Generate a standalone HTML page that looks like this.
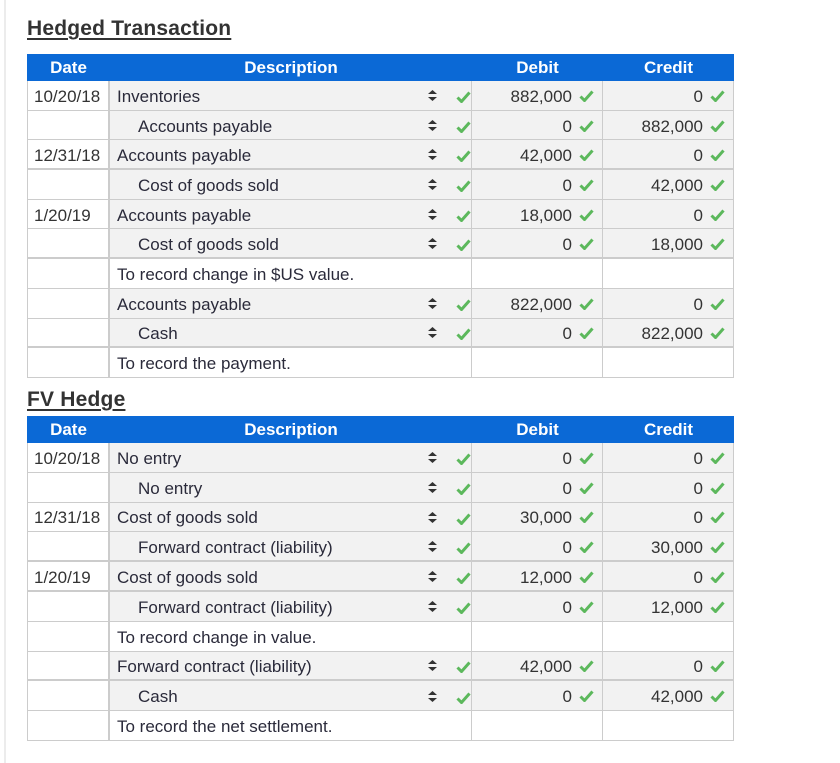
<!DOCTYPE html>
<html><head><meta charset="utf-8">
<style>
*{box-sizing:border-box;margin:0;padding:0}
body{width:840px;height:763px;background:#fff;font-family:"Liberation Sans",sans-serif;color:#333;position:relative;overflow:hidden}
.lb{position:absolute;left:4px;top:0;width:2px;height:763px;background:#ececec}
h2{position:absolute;left:27px;font-size:21px;font-weight:bold;color:#333;text-decoration:underline;text-underline-offset:3px;letter-spacing:0.2px}
.tbl{position:absolute;left:27px;width:707px}
.hd{height:27px;background:#0b69d6;color:#fff;font-weight:bold;font-size:17px;display:flex;align-items:center;padding-top:1px}
.hd div{text-align:center}
.r{display:flex;border-bottom:1px solid #ccc;font-size:17px}
.r.t{border-bottom:2px solid #ccc}
.c{display:flex;align-items:center;height:100%;padding-top:3px}
.d{width:83px;border-right:2px solid #ccc;border-left:1px solid #ccc;padding-left:6px;background:#fff}
.s{width:362px;background:#f2f2f2;border-right:1px solid #ccc;padding-left:7px;position:relative;color:#2a2a3a}
.s.i{padding-left:28px}
.n{width:131px;background:#f2f2f2;border-right:1px solid #ccc;justify-content:flex-end;padding-right:8px}
.w{background:#fff}
.ud{position:absolute;left:316px;top:50%;margin-top:-6px}
.ck{position:absolute;left:346px;top:50%;margin-top:-7px}
.nck{margin-left:7px;margin-top:0px}
</style></head><body>
<div class="lb"></div>

<h2 style="top:17px">Hedged Transaction</h2>
<div class="tbl" style="top:54px" id="t1"></div>

<h2 style="top:388px">FV Hedge</h2>
<div class="tbl" style="top:416px" id="t2"></div>

<script>
var UD='<svg class="ud" width="13" height="13" viewBox="0 0 13 13"><path d="M6.5 1L11 5H2Z M6.5 12L11 8H2Z" fill="#333"/></svg>';
var CK='<svg width="15" height="12" viewBox="0 0 15 12"><path d="M1.5 6.5L5.5 10.5L13.5 1.5" stroke="#5cb85c" stroke-width="3" fill="none"/></svg>';
function row(h,date,desc,ind,deb,cred,thick){
 if(deb===null){
  return '<div class="r'+(thick?' t':'')+'" style="height:'+h+'px"><div class="c d">'+date+'</div><div class="c s w">'+desc+'</div><div class="c n w"></div><div class="c n w"></div></div>';
 }
 return '<div class="r'+(thick?' t':'')+'" style="height:'+h+'px"><div class="c d">'+date+'</div><div class="c s'+(ind?' i':'')+'">'+desc+UD+'<span class="ck">'+CK+'</span></div><div class="c n">'+deb+'<span class="nck">'+CK+'</span></div><div class="c n">'+cred+'<span class="nck">'+CK+'</span></div></div>';
}
function hd(){return '<div class="hd"><div style="width:83px">Date</div><div style="width:362px">Description</div><div style="width:131px">Debit</div><div style="width:131px">Credit</div></div>';}
var h=29.7;
var a=hd()+
row(h,'10/20/18','Inventories',0,'882,000','0')+
row(h,'','Accounts payable',1,'0','882,000')+
row(h,'12/31/18','Accounts payable',0,'42,000','0',1)+
row(h,'','Cost of goods sold',1,'0','42,000')+
row(h,'1/20/19','Accounts payable',0,'18,000','0')+
row(h,'','Cost of goods sold',1,'0','18,000',1)+
row(h,'','To record change in $US value.',0,null)+
row(h,'','Accounts payable',0,'822,000','0')+
row(h,'','Cash',1,'0','822,000',1)+
row(h,'','To record the payment.',0,null);
document.getElementById('t1').innerHTML=a;
var h2=29.8;
var b=hd()+
row(h2,'10/20/18','No entry',0,'0','0')+
row(h2,'','No entry',1,'0','0')+
row(h2,'12/31/18','Cost of goods sold',0,'30,000','0')+
row(h2,'','Forward contract (liability)',1,'0','30,000',1)+
row(h2,'1/20/19','Cost of goods sold',0,'12,000','0',1)+
row(h2,'','Forward contract (liability)',1,'0','12,000')+
row(h2,'','To record change in value.',0,null)+
row(h2,'','Forward contract (liability)',0,'42,000','0',1)+
row(h2,'','Cash',1,'0','42,000')+
row(h2,'','To record the net settlement.',0,null);
document.getElementById('t2').innerHTML=b;
</script>
</body></html>
